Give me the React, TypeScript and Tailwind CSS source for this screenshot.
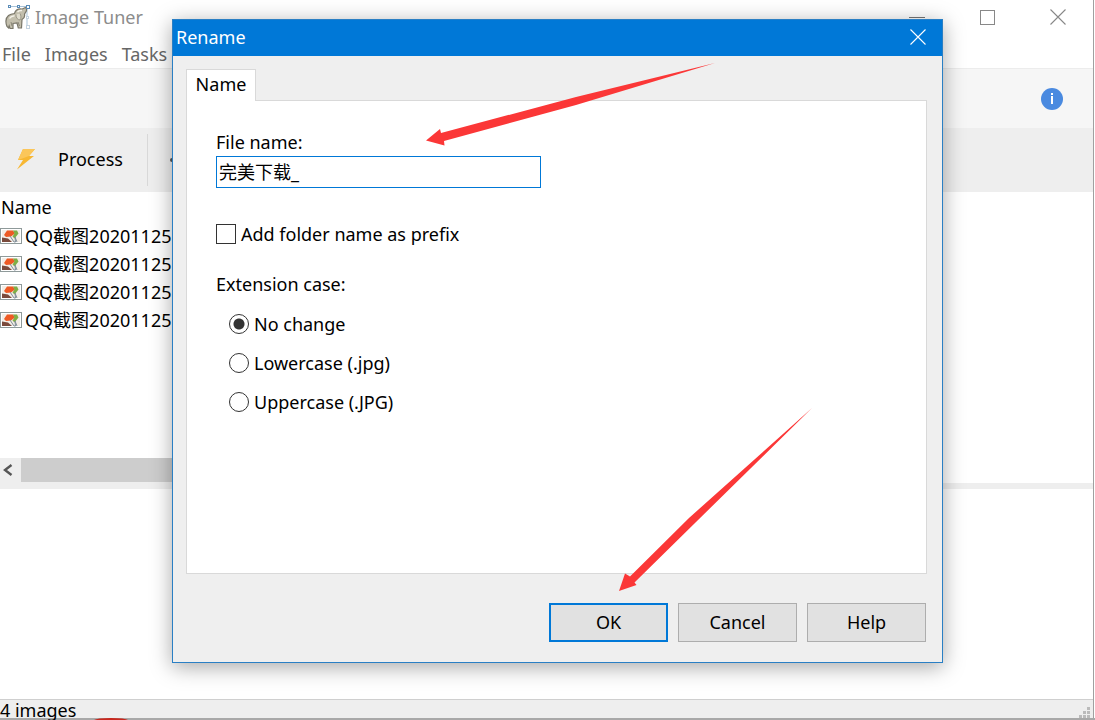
import type { ReactNode } from 'react'
import { useState } from 'react'

const files = ['QQ截图20201125101532', 'QQ截图20201125101547', 'QQ截图20201125101603', 'QQ截图20201125101618']

const cases = [
  { id: 'none', label: 'No change' },
  { id: 'lower', label: 'Lowercase (.jpg)' },
  { id: 'upper', label: 'Uppercase (.JPG)' },
]

function ElephantIcon() {
  return (
    <svg width="26" height="26" viewBox="0 0 26 26" aria-hidden="true">
      <path d="M4 2.500h18v20" fill="none" stroke="#a9c3d8" />
      <path
        d="M2 22.500c-1.500-4-1.500-8.500 1.500-11 2-1.500 4-1.800 6-2 1-3.500 4-5 7.500-4.500 1.500-.4 2.200-1.200 3.500-1.500 1.500 1 1.300 3.200.2 4.700-.7 1-1.200 1.400-1.200 2.300.5 2.500-.5 4-2.500 5l-.5 8.500h-3.200l-1.300-5-4 .5v5H5l-.8-2.500-.7 2z"
        fill="#c3bfad"
        stroke="#7a776a"
        strokeWidth="1.200"
      />
      <path d="M11 10.500c-.3 3.500 2 5.500 4 5.500 1.500-2 1-4.500 0-6.500" fill="#dedbcc" stroke="#8b8879" strokeWidth=".8" />
      <path d="M4.500 14.500c1-1.800 2.500-2.500 5-2.800M12.500 8c1-1.200 2.500-1.800 4.500-1.500" fill="none" stroke="#f3f1e8" strokeWidth="1.500" />
      <path d="M6 18l1 4M13 18l1.500 4" fill="none" stroke="#8b8879" />
      <g fill="#fff" stroke="#5a8cb8">
        <rect x="3.500" y="1.500" width="2" height="2" />
        <rect x="12.500" y="1.500" width="2" height="2" />
        <rect x="21.500" y="1.500" width="3" height="3" />
      </g>
      <g fill="#fff" stroke="#c4d3e0">
        <rect x="21.500" y="12.500" width="2" height="2" />
        <rect x="21.500" y="21.500" width="3" height="3" />
      </g>
    </svg>
  )
}

function BoltIcon() {
  return (
    <svg width="20" height="22" viewBox="0 0 20 22" aria-hidden="true">
      <path d="M7 1h12l-6 7h5L1 21.500 7 12H2z" fill="#f7b733" />
      <path d="M7 1h12l-6 7-11 4z" fill="#fbc65a" />
    </svg>
  )
}

function PictureIcon() {
  return (
    <svg width="22" height="16" viewBox="0 0 22 16" className="shrink-0" aria-hidden="true">
      <rect x=".5" y=".5" width="21" height="15" fill="#fff" stroke="#8f9a9a" />
      <rect x="2" y="2" width="18" height="12" fill="#f3ede6" />
      <path d="M4 7l3-4.500h6l2 3-4 3-5 .5z" fill="#ee5a24" />
      <path d="M13 2.500h4l1.500 3-4 5-2-2 2-3z" fill="#7fae45" />
      <path d="M2 9.500l6 1 4 3.500H2z" fill="#7a4a3c" />
      <path d="M10 8l4 6h1.500l-.5-5 2 5" fill="none" stroke="#7f8d99" strokeWidth="1" />
    </svg>
  )
}

function CloseIcon() {
  return (
    <svg width="16" height="16" viewBox="0 0 16 16" aria-hidden="true">
      <path d="M.5 .5l15 15M15.500 .5l-15 15" fill="none" stroke="currentColor" strokeWidth="1.100" />
    </svg>
  )
}

function DialogButton({ children, primary }: { children: ReactNode; primary?: boolean }) {
  return (
    <button
      type="button"
      className={
        primary
          ? 'h-[39px] w-[119px] border-2 border-[#0078d7] bg-[#e1e1e1] pb-[2px]'
          : 'h-[39px] w-[119px] border border-[#adadad] bg-[#e1e1e1] pb-[2px]'
      }
    >
      {children}
    </button>
  )
}

function MainWindow() {
  return (
    <div className="flex min-h-screen flex-col border-b-2 border-[#a8a8a8] bg-white">
      <div className="mr-px flex flex-1 flex-col border-r border-[#a0a0a0]">
        <header className="flex h-9 items-center justify-between pb-[2px] pl-[5px] pr-[27px] text-[#8c8c8c]">
          <div className="flex items-center gap-1">
            <ElephantIcon />
            <h1>Image Tuner</h1>
          </div>
          <div className="flex items-center gap-[55px]">
            <button type="button" aria-label="Minimize" className="flex h-4 w-4 items-center">
              <span className="h-px w-full bg-[#777]" />
            </button>
            <button type="button" aria-label="Maximize" className="h-[15px] w-[15px] border border-[#888]" />
            <button type="button" aria-label="Close" className="text-[#888]">
              <CloseIcon />
            </button>
          </div>
        </header>
        <nav className="flex h-8 items-center gap-[14px] px-[2px] pt-1 text-[#666]">
          <button type="button">File</button>
          <button type="button">Images</button>
          <button type="button">Tasks</button>
        </nav>
        <div className="flex h-15 items-center justify-end border-t border-[#ececec] bg-[#f6f6f6] pr-[30px]">
          <button type="button" aria-label="About">
            <svg width="22" height="22" viewBox="0 0 22 22" aria-hidden="true">
              <circle cx="11" cy="11" r="11" fill="#4a8ae0" />
              <path d="M10 5h2v2h-2zM10 8h2v8h-2z" fill="#fff" />
            </svg>
          </button>
        </div>
        <div className="flex h-16 items-center bg-[#eee] pl-4">
          <button type="button" className="flex items-center gap-[22px] pb-[2px]">
            <BoltIcon />
            Process
          </button>
          <span className="ml-6 h-[52px] w-px bg-[#d8d8d8]" />
          <span className="ml-[22px] h-1 w-1 rounded-full bg-[#555]" />
        </div>
        <table className="w-full text-left">
          <thead>
            <tr className="h-[30px]">
              <th className="px-px font-normal">Name</th>
            </tr>
          </thead>
          <tbody>
            {files.map((file) => (
              <tr key={file} className="h-7">
                <td>
                  <span className="flex items-center gap-[3px]">
                    <PictureIcon />
                    {file}
                  </span>
                </td>
              </tr>
            ))}
          </tbody>
        </table>
        <div className="mt-[124px] flex h-[31px] items-end bg-[linear-gradient(to_right,#eee_50%,#fff_50%)]">
          <div className="flex h-full w-1/2 items-start">
            <button type="button" aria-label="Scroll left" className="flex h-6 w-[21px] items-center pl-[3px]">
              <svg width="10" height="12" viewBox="0 0 10 12" aria-hidden="true">
                <path d="M8.500 1L2 6l6.500 5" fill="none" stroke="#555" strokeWidth="2.400" />
              </svg>
            </button>
            <div className="h-6 flex-1 bg-[#cdcdcd]" />
          </div>
          <div className="h-[6px] w-1/2 bg-[#eee]" />
        </div>
        <div className="flex-1" />
        <footer className="flex h-[19px] items-start justify-between border-t border-[#cfcfcf] bg-[#eee] pr-[3px]">
          <span className="leading-5">4 images</span>
          <svg width="11" height="11" viewBox="0 0 11 11" className="self-end" aria-hidden="true">
            <path d="M8 0h3v3H8zM4 4h3v3H4zM8 4h3v3H8zM0 8h3v3H0zM4 8h3v3H4zM8 8h3v3H8z" fill="#bbb" />
          </svg>
        </footer>
      </div>
    </div>
  )
}

function RenameDialog() {
  const [name, setName] = useState('完美下载_')
  const [prefix, setPrefix] = useState(false)
  const [extension, setExtension] = useState('none')

  return (
    <section
      role="dialog"
      aria-label="Rename"
      className="w-full border border-[#2a7fc4] bg-[#efefef] shadow-[0_4px_20px_rgba(0,0,0,0.35)]"
    >
      <header className="flex h-9 items-center justify-between bg-[#0078d7] pb-[2px] pl-[3px] pr-4 text-white">
        <h2>Rename</h2>
        <button type="button" aria-label="Close dialog">
          <CloseIcon />
        </button>
      </header>
      <div className="px-[13px] pb-5 pt-[13px]">
        <div role="tablist">
          <button
            type="button"
            role="tab"
            aria-selected="true"
            className="relative -mb-px block h-8 w-[70px] border border-b-0 border-[#d9d9d9] bg-white pb-[3px]"
          >
            Name
          </button>
        </div>
        <div role="tabpanel" className="mr-[2px] min-h-[474px] border border-[#d9d9d9] bg-white px-[29px] pt-[29px]">
          <label htmlFor="file-name" className="block h-[26px] leading-6">
            File name:
          </label>
          <input
            id="file-name"
            type="text"
            value={name}
            onChange={(e) => setName(e.target.value)}
            className="block h-8 w-[325px] border border-[#0078d7] bg-white px-[2px] pb-[2px] outline-none"
          />
          <label className="mt-[34px] flex h-6 items-center gap-[5px]">
            <input
              type="checkbox"
              checked={prefix}
              onChange={(e) => setPrefix(e.target.checked)}
              className="h-5 w-5 appearance-none border border-[#333] bg-white checked:bg-[#0078d7]"
            />
            Add folder name as prefix
          </label>
          <fieldset className="mt-[26px]">
            <legend className="h-6 leading-6">Extension case:</legend>
            <div className="flex flex-col gap-[15px] pl-[13px] pt-4">
              {cases.map((item) => (
                <label key={item.id} className="flex h-6 items-center gap-[5px]">
                  <input
                    type="radio"
                    name="extension"
                    checked={extension === item.id}
                    onChange={() => setExtension(item.id)}
                    className="h-5 w-5 appearance-none rounded-full border border-[#333] bg-white checked:bg-[radial-gradient(circle,#333_5px,#fff_6px)]"
                  />
                  {item.label}
                </label>
              ))}
            </div>
          </fieldset>
        </div>
        <div className="mr-[3px] mt-[29px] flex justify-end gap-[10px]">
          <DialogButton primary>OK</DialogButton>
          <DialogButton>Cancel</DialogButton>
          <DialogButton>Help</DialogButton>
        </div>
      </div>
    </section>
  )
}

export default function App() {
  return (
    <main className="relative overflow-hidden font-['Noto_Sans','Noto_Sans_CJK_SC',sans-serif] text-[18px] leading-6 text-black">
      <MainWindow />
      <div className="absolute inset-x-0 top-0 pl-[172px] pr-[152px] pt-[19px]">
        <RenameDialog />
      </div>
      {/* pointers to the name field and the OK button */}
      <svg width="290" height="84" viewBox="0 0 290 84" className="pointer-events-none absolute left-[426px] top-[63px]" aria-hidden="true">
        <path d="M0 77.500l14-11.500 1 4 135-36L289 0 150 42 18 78l.5 4.500z" fill="#fb3737" />
      </svg>
      <svg width="194" height="184" viewBox="0 0 194 184" className="pointer-events-none absolute left-[619px] top-[408px]" aria-hidden="true">
        <path d="M0 183l6-17.500 5 3L70 110 193 0 76 115 15.500 174.500l2 2.500z" fill="#fb3737" />
      </svg>
      <svg width="34" height="2" viewBox="0 0 34 2" className="absolute bottom-0 left-[94px]" aria-hidden="true">
        <path d="M0 2Q3 0 17 0T34 2z" fill="#c8281e" />
      </svg>
    </main>
  )
}
